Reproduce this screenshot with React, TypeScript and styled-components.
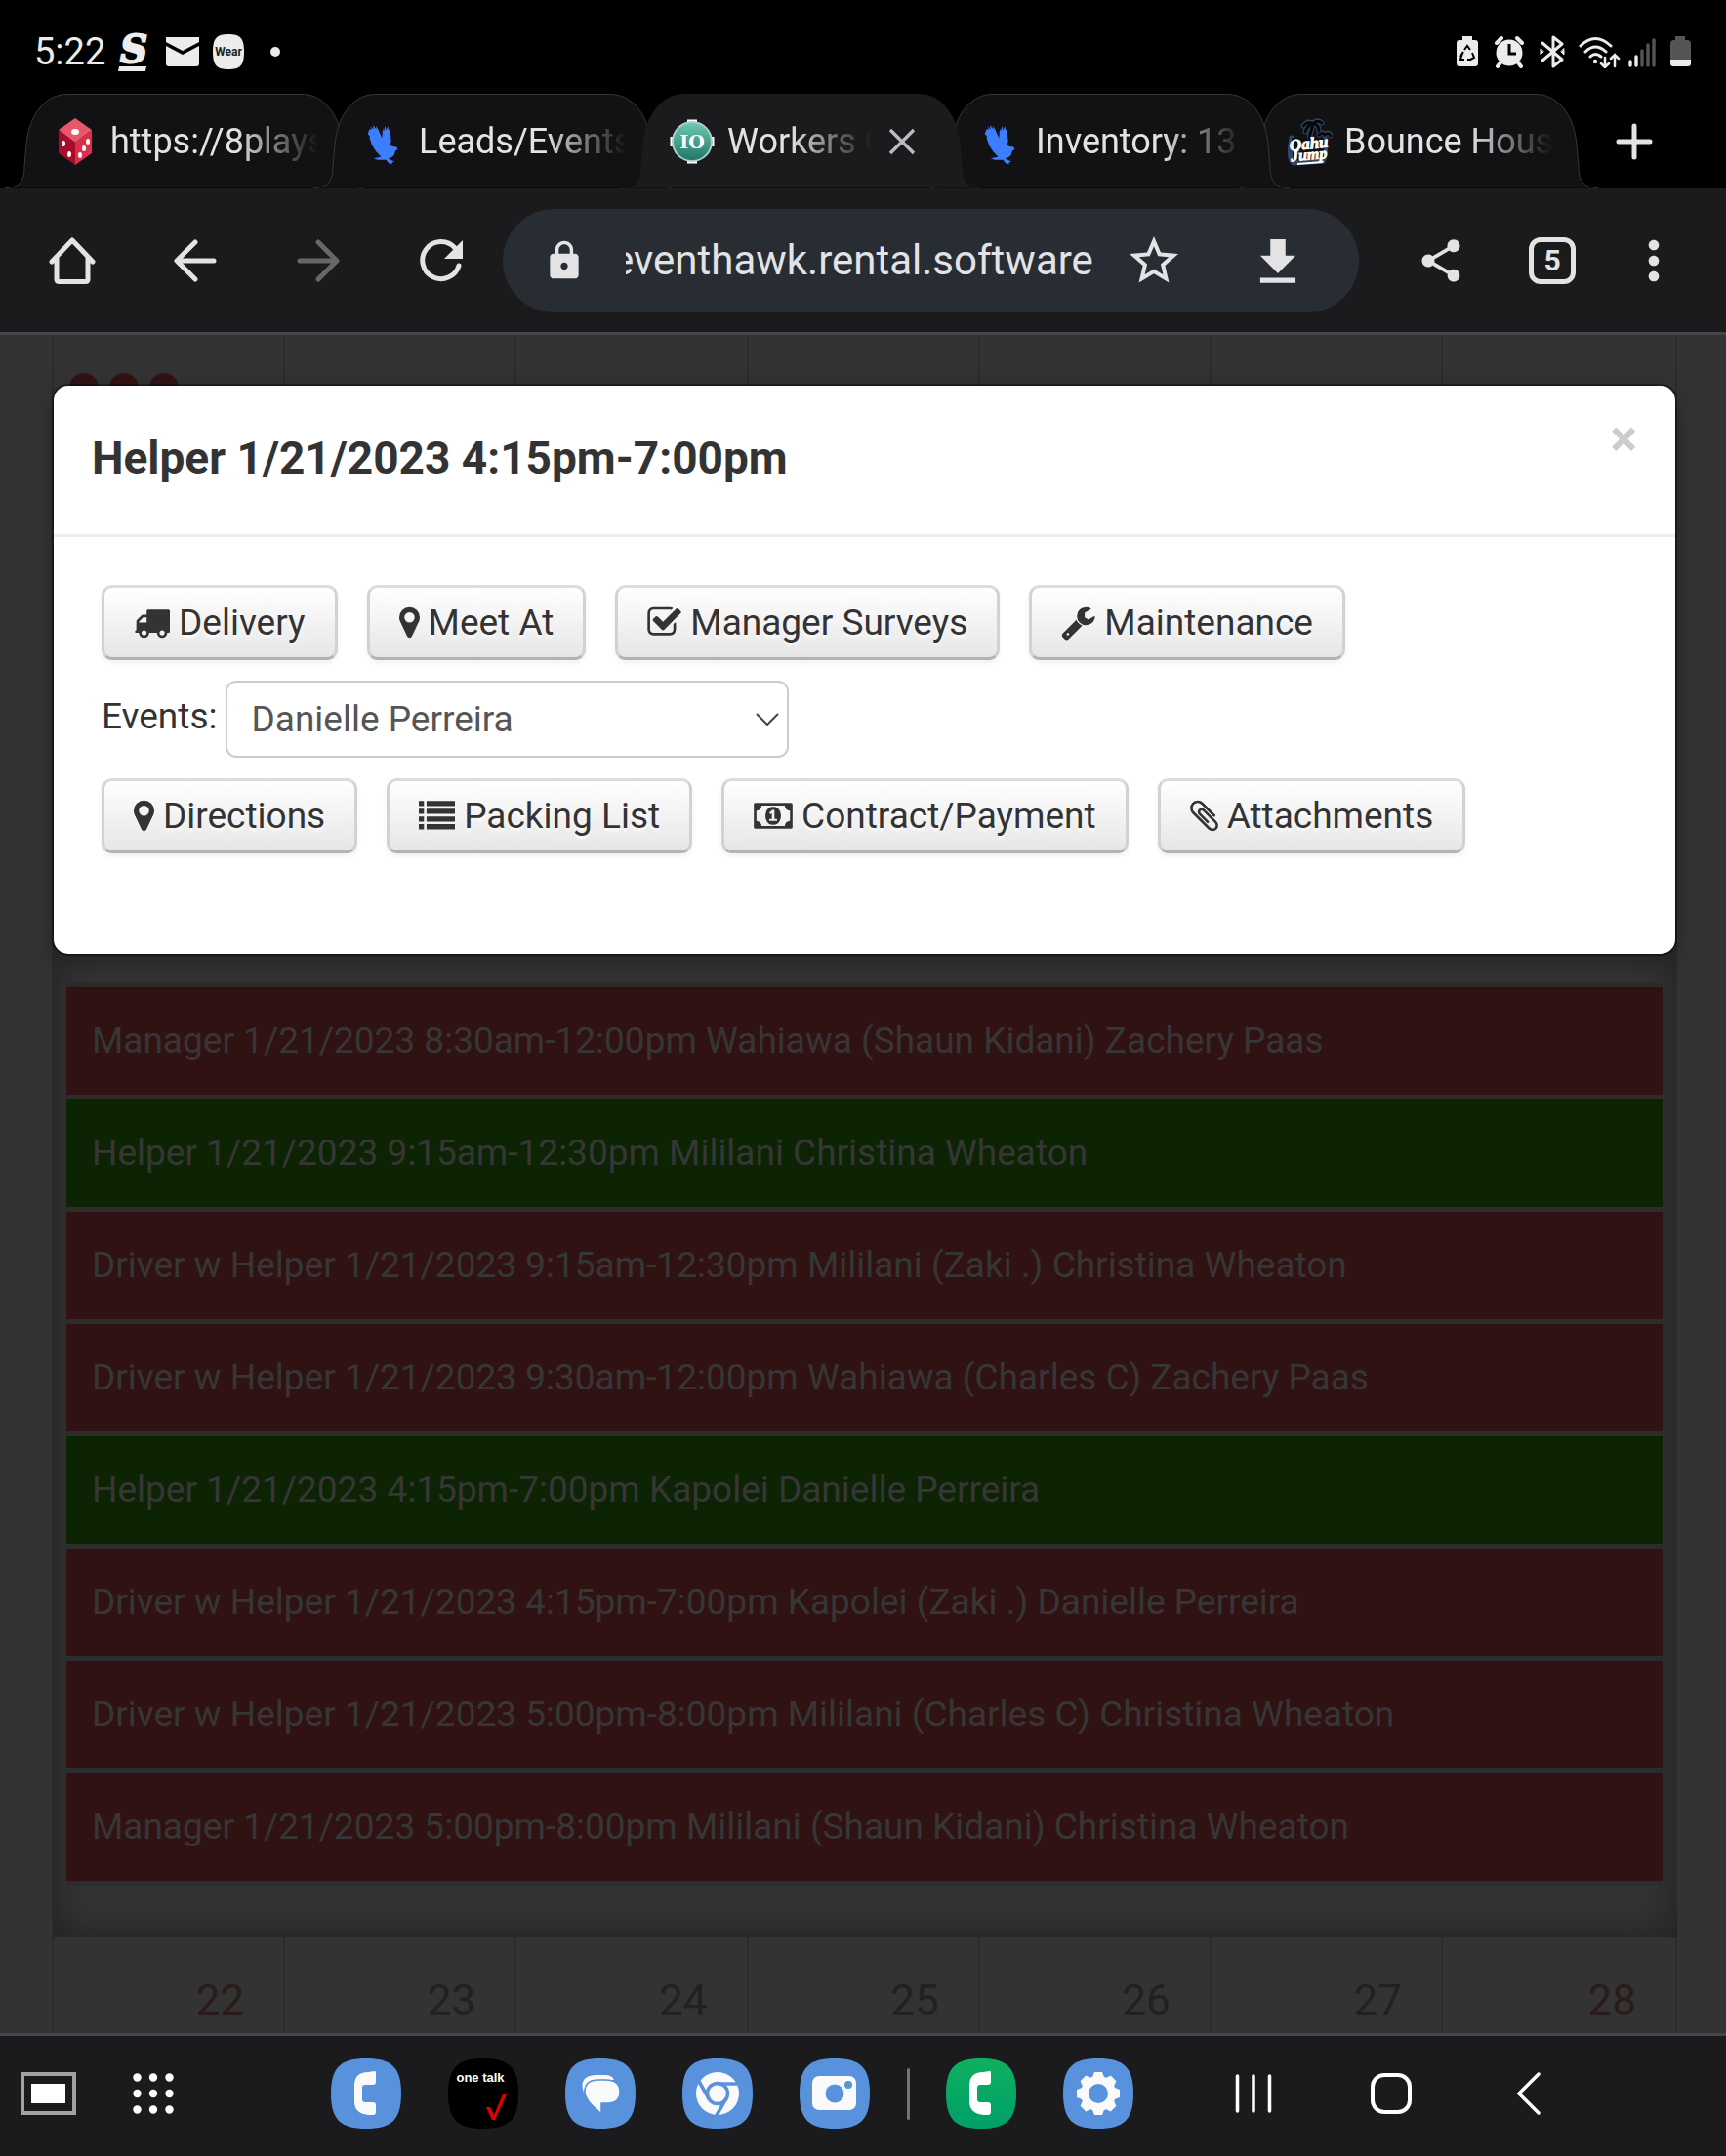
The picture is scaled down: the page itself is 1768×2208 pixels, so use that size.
import React, { useEffect, useRef } from "react";
import styled, { createGlobalStyle } from "styled-components";
import { MdLock, MdMoreVert, MdShare, MdStarBorder } from "react-icons/md";

const INK = "#e3e3e6";
const CHROME = "#1b1b1d";
const EDGE = "#43464d";
const SCRIM = "#333333";
const LINE = "#2c2c2c";

const GlobalStyle = createGlobalStyle`
  *, *::before, *::after { box-sizing: border-box; }
  body { margin: 0; background: ${CHROME}; font-family: Roboto, "Liberation Sans", sans-serif; }
  button { font-family: inherit; }
`;

const Screen = styled.div`
  display: flex;
  flex-direction: column;
  min-height: 100vh;
`;

const Row = styled.div<{ $gap: number }>`
  display: flex;
  align-items: center;
  gap: ${(p) => p.$gap}px;
`;

const IconButton = styled.button<{ $w?: number; $color?: string }>`
  display: flex;
  flex: none;
  align-items: center;
  justify-content: center;
  width: ${(p) => p.$w ?? 48}px;
  padding: 0;
  border: 0;
  background: none;
  color: ${(p) => p.$color ?? INK};

  svg {
    flex: none;
  }
`;

/* ---------- Status bar ---------- */

const StatusBar = styled.header`
  display: flex;
  justify-content: space-between;
  align-items: center;
  height: 96px;
  padding: 10px 30px 0 35px;
  background: #000;
  color: #ececec;
`;

const Clock = styled.time`
  font-size: 38px;
  line-height: 44px;
`;

function StatusIcons() {
  return (
    <Row $gap={8}>
      <svg width="26" height="34" viewBox="0 0 26 34">
        <path d="M8 1h10v4h3q3 0 3 3v21q0 3-3 3H5q-3 0-3-3V8q0-3 3-3h3z" fill="#ececec" />
        <path d="M10 15l3-4 3 4M18 18l2 5-4 2M10 25H6l2-7" fill="none" stroke="#000" strokeWidth="2" />
        <path d="M13 25h4M6 22l3-5" fill="none" stroke="#000" strokeWidth="2" />
      </svg>
      <svg width="44" height="34" viewBox="0 0 44 34" fill="none" stroke="#ececec" strokeLinecap="round">
        <circle cx="22" cy="18" r="13.5" fill="#ececec" stroke="none" />
        <path d="M9 8l5-5M35 8l-5-5M13 28l-3 4M31 28l3 4" strokeWidth="4" />
        <path d="M22 9v10h7" stroke="#000" strokeWidth="3" strokeLinecap="butt" />
      </svg>
      <svg width="28" height="34" viewBox="0 0 28 34" fill="none" stroke="#ececec" strokeWidth="3" strokeLinejoin="round" strokeLinecap="round">
        <path d="M4 8l20 17-9 7V2l9 7L4 26" />
        <path d="M2 14v6l3-3zM26 14v6l-3-3z" fill="#ececec" strokeWidth="1" />
      </svg>
      <svg width="48" height="34" viewBox="0 0 48 34" fill="none" stroke="#ececec" strokeLinecap="round">
        <path d="M7 11Q22-4 38 11M12 17q10-10 21 0M17 22q5-5 11 0" strokeWidth="3" />
        <circle cx="22" cy="27" r="2.2" fill="#ececec" stroke="none" />
        <path d="M32 23v9M28 29l4 4 4-4M42 32V20M38 24l4-4 4 4" strokeWidth="2.5" />
      </svg>
      <svg width="28" height="34" viewBox="0 0 28 34" strokeWidth="3.4" strokeLinecap="round">
        <path d="M2 27v4M8 22v9" stroke="#ececec" />
        <path d="M14 16v15M20 10v21M26 5v26" stroke="#555" />
      </svg>
      <svg width="34" height="34" viewBox="0 0 34 34">
        <path d="M12 1h10v4h2q4 0 4 4v16H7V9q0-4 4-4h1z" fill="#555" />
        <path d="M7 25h21v4q0 3-3 3H10q-3 0-3-3z" fill="#ececec" />
      </svg>
    </Row>
  );
}

function Notifications() {
  return (
    <Row $gap={12}>
      <Clock>5:22</Clock>
      <svg width="38" height="50" viewBox="0 0 38 50" fill="#ececec" overflow="visible">
        <text x="3" y="36" fontFamily="DejaVu Serif, serif" fontStyle="italic" fontWeight="700" fontSize="39" stroke="#ececec" strokeWidth="2">S</text>
        <path d="M2 40h28l-1 5H1z" />
      </svg>
      <svg width="34" height="32" viewBox="0 0 34 32" fill="#ececec">
        <path d="M0 1h34v5L17 15 0 6z" />
        <path d="M0 10l17 9 17-9v18q0 3-3 3H3q-3 0-3-3z" />
      </svg>
      <svg width="36" height="36" viewBox="0 0 36 36">
        <path d="M18 0c12 0 16 4 16 18s-4 18-16 18S2 32 2 18 6 0 18 0z" fill="#ececec" />
        <text x="18" y="22" textAnchor="middle" fontSize="12" fontWeight="700" fill="#222">Wear</text>
      </svg>
      <svg width="40" height="34" viewBox="0 0 40 34">
        <circle cx="18" cy="17" r="5" fill="#ececec" />
      </svg>
    </Row>
  );
}

/* ---------- Tab strip ---------- */

const TabStrip = styled.nav`
  display: flex;
  align-items: center;
  height: 97px;
  padding-left: 5px;
  overflow: hidden;
  background: #000;
`;

const Tab = styled.div<{ $level: number }>`
  position: relative;
  z-index: ${(p) => p.$level};
  display: flex;
  flex: none;
  align-items: center;
  width: 368px;
  height: 97px;
  margin-right: -52px;
  padding: 0 47px 0 48px;
`;

const TabShape = styled.svg`
  position: absolute;
  inset: 0;
  z-index: -1;
`;

const TabTitle = styled.a`
  flex: 1;
  min-width: 0;
  margin-left: 12px;
  overflow: hidden;
  color: ${INK};
  font-size: 36px;
  line-height: 50px;
  text-decoration: none;
  white-space: nowrap;
  mask-image: linear-gradient(to left, transparent, #000 84px);
`;

const TabClose = styled(IconButton)`
  margin: 0 7px 0 4px;
`;

const NewTab = styled(IconButton)`
  margin-left: 65px;
`;

const HawkIcon = () => (
  <svg width="48" height="48" viewBox="-4 -4 56 56" fill="#3f7dff">
    <path d="M7 9l3 1-2-4 4 3-1-5 4 5 0-4 3 6 4 9 1-12 1 4 2-7 1 6 2-6 1 6 2-4 0 7 1 10-2 4 5 2 3 0 2 3-3 2-2 6-5 3-2 0 6 3 2 1-3 1 0 2-4-1-3-4-10 0-5-2 6-1 3-1-6-6-5-8-3-9 1-1-3-3z" />
  </svg>
);

const DiceIcon = () => (
  <svg width="48" height="48" viewBox="0 0 48 48">
    <path d="M24 0l17 12-17 13L7 12z" fill="#e8586a" />
    <path d="M7 12l17 13v23L7 36z" fill="#a60d2a" />
    <path d="M41 12L24 25v23l17-12z" fill="#dc2f4b" />
    <g fill="#fff">
      <ellipse cx="24" cy="14" rx="4" ry="3" />
      <ellipse cx="12" cy="26" rx="2" ry="3" />
      <ellipse cx="18" cy="37" rx="2" ry="3" />
      <ellipse cx="37" cy="24" rx="2" ry="3" />
      <ellipse cx="33" cy="31" rx="2" ry="3" />
      <ellipse cx="29" cy="38" rx="2" ry="3" />
    </g>
  </svg>
);

const IoIcon = () => (
  <svg width="48" height="48" viewBox="0 0 48 48">
    <defs>
      <linearGradient id="io" x1="0" y1="0" x2="0" y2="1">
        <stop offset="0" stopColor="#6ecbb4" />
        <stop offset="1" stopColor="#1f7467" />
      </linearGradient>
    </defs>
    <path d="M19 3h10M19 45h10M3 19v10M45 19v10" stroke="#fff" strokeWidth="3" />
    <circle cx="24" cy="24" r="20" fill="url(#io)" stroke="#a9cfc6" strokeWidth="2" />
    <text x="24" y="31" textAnchor="middle" fontFamily="DejaVu Serif, serif" fontWeight="700" fontSize="19" fill="#fff">IO</text>
  </svg>
);

const OahuIcon = () => (
  <svg width="48" height="52" viewBox="0 0 48 52">
    <g fill="none" stroke="#34495f" strokeWidth="5" strokeLinecap="round">
      <path d="M18 10q6-7 10-2 4-6 9-1M20 16q3-8 8-8 6 0 6 7M34 19q4-4 6 0 4-4 6 1M28 8l-4 14" />
      <path d="M6 22q-4 22 2 26 16-1 30-2 4-8 2-24" />
    </g>
    <path d="M6 22h33v22H8z" fill="#0c1117" />
    <g fill="none" stroke="#05080b" strokeWidth="3" strokeLinecap="round">
      <path d="M18 10q6-6 10-2 4-5 9-1M20 16q3-8 8-8 6 0 6 7M34 19q4-3 6 0 4-3 6 1M28 8l-4 14" />
    </g>
    <g fill="#fff" fontFamily="Liberation Serif, serif" fontStyle="italic" fontWeight="700" stroke="#fff" strokeWidth="0.8">
      <text x="4" y="34" fontSize="17" transform="rotate(-6 20 30)">Oahu</text>
      <text x="5" y="45" fontSize="16" transform="rotate(-5 20 40)">Jump</text>
    </g>
    <path d="M12 49l26-2" stroke="#fff" strokeWidth="2" />
  </svg>
);

const tabs = [
  { title: "https://8plays", Icon: DiceIcon, level: 1 },
  { title: "Leads/Events", Icon: HawkIcon, level: 2 },
  { title: "Workers Calendar", Icon: IoIcon, level: 3, active: true },
  { title: "Inventory: 13", Icon: HawkIcon, level: 2 },
  { title: "Bounce House", Icon: OahuIcon, level: 1 },
];

const TAB_EDGE = "M0 96.5C16 96.5 20 88 20 74L22 52C25 20 42 .5 64 .5H304C326 .5 343 20 346 52L348 74C348 88 352 96.5 368 96.5";

function BrowserTabs() {
  return (
    <TabStrip aria-label="Open tabs">
      {tabs.map(({ title, Icon, level, active }) => (
        <Tab key={title} $level={level}>
          <TabShape width="368" height="97" viewBox="0 0 368 97">
            <path d={TAB_EDGE} fill={active ? CHROME : "#121214"} stroke={active ? CHROME : "#37373a"} />
          </TabShape>
          <Icon />
          <TabTitle href="#">{title}</TabTitle>
          {active && (
            <TabClose aria-label="Close tab" $w={54}>
              <svg width="28" height="28" viewBox="0 0 28 28" stroke="#bcbcc0" strokeWidth="3.4">
                <path d="M2 2l24 24M26 2L2 26" />
              </svg>
            </TabClose>
          )}
        </Tab>
      ))}
      <NewTab aria-label="New tab">
        <svg width="38" height="38" viewBox="0 0 38 38" stroke={INK} strokeWidth="5" strokeLinecap="round">
          <path d="M19 3v32M3 19h32" />
        </svg>
      </NewTab>
    </TabStrip>
  );
}

/* ---------- Toolbar ---------- */

const Toolbar = styled.div`
  display: flex;
  align-items: center;
  height: 150px;
  padding: 0 54px 0 50px;
  border-bottom: 3px solid ${EDGE};
  background: ${CHROME};
`;

const Omnibox = styled.div`
  display: flex;
  flex: 1;
  align-items: center;
  min-width: 0;
  height: 106px;
  margin: 0 54px 0 39px;
  padding: 0 52px 0 41px;
  border-radius: 53px;
  background: #282d34;
  color: ${INK};
`;

const UrlInput = styled.input`
  flex: 1;
  min-width: 0;
  margin: 0 32px 0 41px;
  padding: 0;
  border: 0;
  outline: 0;
  background: none;
  color: ${INK};
  font-family: inherit;
  font-size: 42px;
  line-height: 56px;
`;

const DownloadButton = styled(IconButton)`
  margin-left: 66px;
`;

const TabCount = styled.button`
  width: 48px;
  height: 48px;
  padding: 0;
  border: 5px solid ${INK};
  border-radius: 12px;
  background: none;
  color: ${INK};
  font-size: 30px;
  font-weight: 700;
  line-height: 36px;
`;

function BrowserToolbar() {
  const url = useRef<HTMLInputElement>(null);
  useEffect(() => {
    if (url.current) url.current.scrollLeft = url.current.scrollWidth;
  }, []);
  const stroke = { fill: "none", strokeWidth: 5, strokeLinecap: "round", strokeLinejoin: "round" } as const;
  return (
    <Toolbar>
      <Row $gap={78}>
        <IconButton aria-label="Home">
          <svg width="48" height="48" viewBox="0 0 48 48" stroke={INK} {...stroke}>
            <path d="M3 25L24 3l21 22M8 21v22q0 2.500 2.500 2.500h27Q40 45.500 40 43V21" />
          </svg>
        </IconButton>
        <IconButton aria-label="Back">
          <svg width="48" height="48" viewBox="0 0 48 48" stroke={INK} {...stroke}>
            <path d="M43 24H6M24 5L5 24l19 19" />
          </svg>
        </IconButton>
        <IconButton aria-label="Forward">
          <svg width="48" height="48" viewBox="0 0 48 48" stroke="#68686b" {...stroke}>
            <path d="M5 24h37M24 5l19 19-19 19" />
          </svg>
        </IconButton>
        <IconButton aria-label="Reload">
          <svg width="48" height="48" viewBox="0 0 48 48" stroke={INK} {...stroke}>
            <path d="M42 29A19 19 0 1 1 38 11" />
            <path d="M46 3v19H27z" fill={INK} stroke="none" />
          </svg>
        </IconButton>
      </Row>
      <Omnibox>
        <MdLock size={44} />
        <UrlInput ref={url} aria-label="Address" defaultValue="eventhawk.rental.software" />
        <IconButton aria-label="Bookmark" $w={60}>
          <MdStarBorder size={60} />
        </IconButton>
        <DownloadButton aria-label="Download" $w={62}>
          <svg width="62" height="62" viewBox="0 0 24 24" fill={INK}>
            <path d="M19 10h-4V3.500H9V10H5l7 7zM5 18.800v2h14v-2z" />
          </svg>
        </DownloadButton>
      </Omnibox>
      <Row $gap={60}>
        <IconButton aria-label="Share" $w={60}>
          <MdShare size={52} />
        </IconButton>
        <TabCount aria-label="Switch tabs">5</TabCount>
        <IconButton aria-label="Menu" $w={40}>
          <MdMoreVert size={64} />
        </IconButton>
      </Row>
    </Toolbar>
  );
}

/* ---------- Calendar page ---------- */

const Page = styled.main`
  position: relative;
  flex: 1;
  padding: 0 50px 0 53px;
  background: ${SCRIM};
`;

const Week = styled.div<{ $h: number }>`
  display: grid;
  grid-template-columns: repeat(6, 1fr) 240px;
  height: ${(p) => p.$h}px;
  border-right: 2px solid ${LINE};
`;

const Day = styled.div<{ $weekend?: boolean }>`
  padding: 39px 40px 0 16px;
  border-left: 2px solid ${LINE};
  color: ${(p) => (p.$weekend ? "#2a1b1b" : "#212121")};
  font-size: 44px;
  line-height: 52px;
  text-align: right;
`;

const Dots = styled.div`
  display: flex;
  gap: 11px;
`;

const Dot = styled.span`
  width: 30px;
  height: 30px;
  border-radius: 50%;
  background: #311213;
`;

const DayPanel = styled.section`
  padding: 63px 15px 53px 14px;
  border-left: 1px solid ${LINE};
  box-shadow: inset 0 0 40px rgba(0, 0, 0, 0.38);
`;

const ShiftList = styled.ul`
  display: grid;
  gap: 5px;
  margin: 0;
  padding: 5px 0;
  background: ${LINE};
  list-style: none;
`;

const Shift = styled.a<{ $open?: boolean }>`
  display: block;
  padding: 0 26px;
  background: ${(p) => (p.$open ? "#0c2404" : "#311213")};
  color: #363636;
  font-size: 37px;
  line-height: 110px;
  text-decoration: none;
  white-space: nowrap;
  overflow: hidden;
`;

const shifts = [
  { text: "Manager 1/21/2023 8:30am-12:00pm Wahiawa (Shaun Kidani) Zachery Paas" },
  { text: "Helper 1/21/2023 9:15am-12:30pm Mililani Christina Wheaton", open: true },
  { text: "Driver w Helper 1/21/2023 9:15am-12:30pm Mililani (Zaki .) Christina Wheaton" },
  { text: "Driver w Helper 1/21/2023 9:30am-12:00pm Wahiawa (Charles C) Zachery Paas" },
  { text: "Helper 1/21/2023 4:15pm-7:00pm Kapolei Danielle Perreira", open: true },
  { text: "Driver w Helper 1/21/2023 4:15pm-7:00pm Kapolei (Zaki .) Danielle Perreira" },
  { text: "Driver w Helper 1/21/2023 5:00pm-8:00pm Mililani (Charles C) Christina Wheaton" },
  { text: "Manager 1/21/2023 5:00pm-8:00pm Mililani (Shaun Kidani) Christina Wheaton" },
];

/* ---------- Shift dialog ---------- */

const Dialog = styled.div`
  position: absolute;
  top: 52px;
  left: 55px;
  right: 52px;
  border-radius: 15px;
  background: #fff;
  box-shadow: 0 0 0 2px rgba(0, 0, 0, 0.35), 0 8px 26px rgba(0, 0, 0, 0.3);
  color: #333;
  font-size: 37px;
`;

const DialogHeader = styled.header`
  display: flex;
  justify-content: space-between;
  align-items: flex-start;
  padding: 29px 39px 48px;
  border-bottom: 3px solid #eee;
`;

const DialogTitle = styled.h3`
  margin: 15px 0 0;
  font-size: 46px;
  font-weight: 700;
  line-height: 60px;
`;

const CloseButton = styled.button`
  padding: 0;
  border: 0;
  background: none;
  color: #ccc;
  font-size: 52px;
  font-weight: 700;
  line-height: 52px;
`;

const DialogBody = styled.div`
  display: grid;
  gap: 21px;
  padding: 49px 49px 103px;
`;

const ActionButton = styled.button`
  display: flex;
  align-items: center;
  gap: 9px;
  height: 77px;
  padding: 0 30px;
  border: 3px solid;
  border-color: #dcdcdc #d2d2d2 #b3b3b3;
  border-radius: 11px;
  background: linear-gradient(#fff, #e6e6e6);
  box-shadow: 0 3px 5px rgba(0, 0, 0, 0.06);
  color: #333;
  font-size: 37px;
  line-height: 52px;
  text-shadow: 0 3px 3px rgba(255, 255, 255, 0.75);
`;

const EventsLabel = styled.label`
  padding-bottom: 6px;
  line-height: 52px;
`;

const SelectBox = styled.div`
  position: relative;
`;

const Select = styled.select`
  display: block;
  width: 577px;
  height: 79px;
  padding: 0 60px 0 24px;
  border: 2px solid #ccc;
  border-radius: 11px;
  appearance: none;
  background: #fff;
  color: #555;
  font-family: inherit;
  font-size: 37px;
`;

const Chevron = styled.svg`
  position: absolute;
  top: 32px;
  right: 10px;
  pointer-events: none;
`;

const glyphs = {
  truck: {
    box: "0 0 1792 1792",
    w: 37,
    d: "M640 1408q0-52-38-90t-90-38-90 38-38 90 38 90 90 38 90-38 38-90zm-384-512h384v-256h-158q-13 0-22 9l-195 195q-9 9-9 22v30zm1280 512q0-52-38-90t-90-38-90 38-38 90 38 90 90 38 90-38 38-90zm256-1088v1024q0 15-4 26.500t-13.500 18.500-16.500 11.500-23.500 6-22.500 2-25.500 0-22.500-.5q0 106-75 181t-181 75-181-75-75-181h-384q0 106-75 181t-181 75-181-75-75-181h-64q-3 0-22.500.5t-25.500 0-22.500-2-23.500-6-16.500-11.500-13.500-18.500-4-26.500q0-26 19-45t45-19v-320q0-8-.5-35t0-38 2.500-34.500 6.500-37 14-30.500 22.500-30l198-198q19-19 50.500-32t58.500-13h160v-192q0-26 19-45t45-19h1024q26 0 45 19t19 45z",
  },
  marker: {
    box: "384 0 1024 1792",
    w: 21,
    d: "M1152 640q0-106-75-181t-181-75-181 75-75 181 75 181 181 75 181-75 75-181zm256 0q0 109-33 179l-364 774q-16 33-47.500 52t-67.500 19-67.500-19-46.500-52l-365-774q-33-70-33-179 0-212 150-362t362-150 362 150 150 362z",
  },
  check: {
    box: "64 0 1664 1792",
    w: 35,
    d: "M1472 930v318q0 119-84.500 203.500t-203.500 84.500h-832q-119 0-203.500-84.500t-84.500-203.500v-832q0-119 84.500-203.500t203.500-84.500h832q63 0 117 25 15 7 18 23 3 17-9 29l-49 49q-10 10-23 10-3 0-9-2-23-6-45-6h-832q-66 0-113 47t-47 113v832q0 66 47 113t113 47h832q66 0 113-47t47-113v-254q0-13 9-22l64-64q10-10 23-10 6 0 12 3 20 8 20 29zm231-489l-814 814q-24 24-57 24t-57-24l-430-430q-24-24-24-57t24-57l110-110q24-24 57-24t57 24l263 263 647-647q24-24 57-24t57 24l110 110q24 24 24 57t-24 57z",
  },
  wrench: {
    box: "64 0 1664 1792",
    w: 35,
    d: "M448 1472q0-26-19-45t-45-19-45 19-19 45 19 45 45 19 45-19 19-45zm644-420l-682 682q-37 37-90 37-52 0-91-37l-106-108q-38-36-38-90 0-53 38-91l681-681q39 98 114.500 173.500t173.500 114.500zm634-435q0 39-23 106-47 134-164.500 217.500t-258.500 83.500q-185 0-316.500-131.500t-131.500-316.500 131.500-316.500 316.500-131.500q58 0 121.500 16.500t107.500 46.500q16 11 16 28t-16 28l-293 169v224l193 107q5-3 79-48.500t135.500-81 70.500-35.500q15 0 23.500 10t8.500 25z",
  },
  list: {
    box: "0 0 1792 1792",
    w: 37,
    d: "M0 160h256v256H0zM384 160h1408v256H384zM0 544h256v256H0zM384 544h1408v256H384zM0 928h256v256H0zM384 928h1408v256H384zM0 1312h256v256H0zM384 1312h1408v256H384z",
  },
  money: {
    box: "-64 0 1920 1792",
    w: 40,
    d: "M704 1152h384v-96h-128V608H846L698 745l77 80q42-37 55-57h2v288H704zM1280 896q0 121-43 223t-119 163.500-222 61.500-222-61.500-119-163.500-43-223 43-223 119-163.500 222-61.500 222 61.500 119 163.500 43 223zM1728 1152V640q-106 0-181-75t-75-181H320q0 106-75 181T64 640v512q106 0 181 75t75 181h1152q0-106 75-181t181-75zM1856 320v1152q0 26-19 45t-45 19H0q-26 0-45-19t-19-45V320q0-26 19-45t45-19h1792q26 0 45 19t19 45z",
  },
  clip: {
    box: "192 0 1408 1792",
    w: 29,
    d: "M1596 1385q0 117-79 196t-196 79q-135 0-235-100l-777-776q-113-115-113-271 0-159 110-270t269-111q158 0 273 113l605 606q10 10 10 22 0 16-30.500 46.500t-46.500 30.500q-13 0-23-10l-606-607q-79-77-181-77-106 0-179 75t-73 181q0 105 76 181l776 777q63 63 145 63 64 0 106-42t42-106q0-82-63-145l-581-581q-26-24-60-24-29 0-48 19t-19 48q0 32 25 59l410 410q10 10 10 22 0 16-31 47t-47 31q-12 0-22-10l-410-410q-63-61-63-149 0-82 57-139t139-57q88 0 149 63l581 581q100 98 100 235z",
  },
};

function Action({ icon, children }: { icon: keyof typeof glyphs; children: React.ReactNode }) {
  const g = glyphs[icon];
  return (
    <ActionButton type="button">
      <svg width={g.w} height="37" viewBox={g.box} fill="currentColor" fillRule="evenodd">
        <path d={g.d} />
      </svg>
      {children}
    </ActionButton>
  );
}

function ShiftDialog() {
  return (
    <Dialog role="dialog" aria-labelledby="dialog-title">
      <DialogHeader>
        <DialogTitle id="dialog-title">Helper 1/21/2023 4:15pm-7:00pm</DialogTitle>
        <CloseButton aria-label="Close">×</CloseButton>
      </DialogHeader>
      <DialogBody>
        <Row $gap={30}>
          <Action icon="truck">Delivery</Action>
          <Action icon="marker">Meet At</Action>
          <Action icon="check">Manager Surveys</Action>
          <Action icon="wrench">Maintenance</Action>
        </Row>
        <Row $gap={9}>
          <EventsLabel htmlFor="events">Events:</EventsLabel>
          <SelectBox>
            <Select id="events" defaultValue="dp">
              <option value="dp">Danielle Perreira</option>
            </Select>
            <Chevron width="24" height="16" viewBox="0 0 24 16" fill="none" stroke="#444" strokeWidth="2">
              <path d="M1 2l11 11L23 2" />
            </Chevron>
          </SelectBox>
        </Row>
        <Row $gap={30}>
          <Action icon="marker">Directions</Action>
          <Action icon="list">Packing List</Action>
          <Action icon="money">Contract/Payment</Action>
          <Action icon="clip">Attachments</Action>
        </Row>
      </DialogBody>
    </Dialog>
  );
}

/* ---------- System navigation bar ---------- */

const NavBar = styled.footer`
  display: flex;
  align-items: center;
  height: 126px;
  padding: 0 21px 5px;
  border-top: 3px solid ${EDGE};
  background: ${CHROME};
`;

const Dock = styled(Row)`
  margin: 0 38px 0 161px;
`;

const Recent = styled(Row)`
  margin: 0 99px 0 37px;
`;

const Divider = styled.span`
  width: 3px;
  height: 53px;
  border-radius: 2px;
  background: #737376;
`;

const SQUIRCLE = "M36 0C62 0 72 9 72 36S62 72 36 72 0 63 0 36 10 0 36 0z";
const HANDSET = "M45 13q1 0 1 2v9q0 3-3 3h-8q-3 0-3 3v12q0 3 3 3h8q3 0 3 3v7q0 3-3 3h-4Q24 57 24 44V28Q24 14 38 14z";

function AppButton({ label, fill = "#5892dc", children }: { label: string; fill?: string; children: React.ReactNode }) {
  return (
    <IconButton aria-label={label} $w={72}>
      <svg width="72" height="72" viewBox="0 0 72 72">
        <defs>
          <linearGradient id="call" x1="0" y1="0" x2="0" y2="1">
            <stop offset="0" stopColor="#0fb060" />
            <stop offset="1" stopColor="#009f69" />
          </linearGradient>
        </defs>
        <path d={SQUIRCLE} fill={fill} />
        {children}
      </svg>
    </IconButton>
  );
}

function SystemNav() {
  const teeth = [0, 45, 90, 135, 180, 225, 270, 315];
  return (
    <NavBar>
      <Row $gap={58}>
        <IconButton aria-label="Screen" $w={57}>
          <svg width="57" height="44" viewBox="0 0 57 44">
            <rect x="2" y="2" width="53" height="40" fill="none" stroke="#a2a2a2" strokeWidth="4" />
            <rect x="11" y="12" width="35" height="20" fill="#fff" />
          </svg>
        </IconButton>
        <IconButton aria-label="All apps" $w={42}>
          <svg width="42" height="42" viewBox="0 0 42 42" fill="#fff">
            {[4.5, 21, 37.5].map((y) => [4.5, 21, 37.5].map((x) => <circle key={`${x}-${y}`} cx={x} cy={y} r="4.2" />))}
          </svg>
        </IconButton>
      </Row>
      <Dock $gap={48}>
        <AppButton label="Phone">
          <path d={HANDSET} fill="#fafafa" />
        </AppButton>
        <AppButton label="One Talk" fill="#000">
          <text x="33" y="24" textAnchor="middle" fontFamily="Liberation Sans, sans-serif" fontSize="13" fontWeight="700" fill="#fff">one talk</text>
          <path d="M39 50h4l4 8 9-21h4L48 63h-3z" fill="#e00000" />
        </AppButton>
        <AppButton label="Messages">
          <path d="M19 35q-6-17 12-18h10q7 0 9 5H33q-13 1-14 13z" fill="#fafafa" />
          <path d="M34 22h7q15 0 15 12t-13 12h-6v9q-2 1-3-1Q20 43 20 34q0-12 14-12z" fill="#fafafa" stroke="#5892dc" strokeWidth="1.500" />
        </AppButton>
        <AppButton label="Chrome">
          <circle cx="36" cy="36" r="22" fill="#fafafa" />
          <circle cx="36" cy="36" r="10.500" fill="#fafafa" stroke="#5892dc" strokeWidth="3.500" />
          <path d="M36 26h22M27 41L16 22M45 41L34 60" fill="none" stroke="#5892dc" strokeWidth="3.500" />
        </AppButton>
        <AppButton label="Camera">
          <rect x="13" y="18" width="45" height="35" rx="7" fill="#fafafa" />
          <circle cx="36" cy="36" r="9.500" fill="#5892dc" />
          <circle cx="50" cy="27" r="4" fill="#5892dc" />
        </AppButton>
      </Dock>
      <Divider />
      <Recent $gap={48}>
        <AppButton label="Call" fill="url(#call)">
          <path d={HANDSET} fill="#fff" />
        </AppButton>
        <AppButton label="Settings">
          <g fill="#fafafa">
            {teeth.map((a) => (
              <path key={a} d="M32 14h8l3 8H29z" transform={`rotate(${a} 36 36)`} />
            ))}
            <circle cx="36" cy="36" r="18" />
          </g>
          <circle cx="36" cy="36" r="10" fill="#5892dc" />
        </AppButton>
      </Recent>
      <Row $gap={93}>
        <IconButton aria-label="Recents">
          <svg width="48" height="44" viewBox="0 0 48 44" stroke="#fff" strokeWidth="3.500" strokeLinecap="round">
            <path d="M7.500 4v36M24 4v36M40.500 4v36" />
          </svg>
        </IconButton>
        <IconButton aria-label="Home screen">
          <svg width="48" height="44" viewBox="0 0 48 44" fill="none" stroke="#fff" strokeWidth="4">
            <rect x="5" y="3" width="38" height="38" rx="12" />
          </svg>
        </IconButton>
        <IconButton aria-label="Go back">
          <svg width="48" height="44" viewBox="0 0 48 44" fill="none" stroke="#fff" strokeWidth="3.500" strokeLinecap="round">
            <path d="M34 2L14 22l20 20" />
          </svg>
        </IconButton>
      </Row>
    </NavBar>
  );
}

export default function App() {
  return (
    <Screen>
      <GlobalStyle />
      <StatusBar>
        <Notifications />
        <StatusIcons />
      </StatusBar>
      <BrowserTabs />
      <BrowserToolbar />
      <Page>
        <Week $h={600}>
          <Day>
            <Dots>
              <Dot />
              <Dot />
              <Dot />
            </Dots>
          </Day>
          {[2, 3, 4, 5, 6, 7].map((n) => (
            <Day key={n} />
          ))}
        </Week>
        <DayPanel>
          <ShiftList>
            {shifts.map((s) => (
              <li key={s.text}>
                <Shift href="#" $open={s.open}>
                  {s.text}
                </Shift>
              </li>
            ))}
          </ShiftList>
        </DayPanel>
        <Week $h={97}>
          {[22, 23, 24, 25, 26, 27, 28].map((n) => (
            <Day key={n} $weekend={n === 22 || n === 28}>
              {n}
            </Day>
          ))}
        </Week>
        <ShiftDialog />
      </Page>
      <SystemNav />
    </Screen>
  );
}
